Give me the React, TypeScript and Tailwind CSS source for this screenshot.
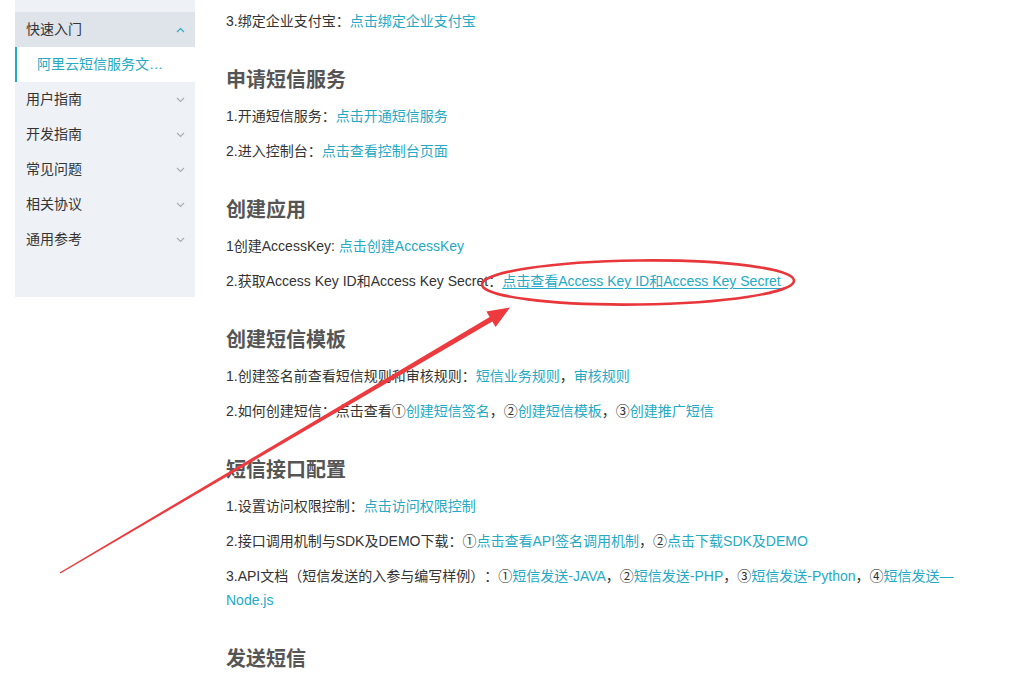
import React from 'react';

const FONT = { fontFamily: '"Liberation Sans", "Noto Sans CJK SC", sans-serif' };

type Part = string | { link: string; underline?: boolean };

interface Section {
    title?: string;
    lines: Part[][];
}

const sections: Section[] = [
    {
        lines: [['3.绑定企业支付宝：', { link: '点击绑定企业支付宝' }]]
    },
    {
        title: '申请短信服务',
        lines: [
            ['1.开通短信服务：', { link: '点击开通短信服务' }],
            ['2.进入控制台：', { link: '点击查看控制台页面' }]
        ]
    },
    {
        title: '创建应用',
        lines: [
            ['1创建AccessKey: ', { link: '点击创建AccessKey' }],
            ['2.获取Access Key ID和Access Key Secret：', { link: '点击查看Access Key ID和Access Key Secret', underline: true }]
        ]
    },
    {
        title: '创建短信模板',
        lines: [
            ['1.创建签名前查看短信规则和审核规则：', { link: '短信业务规则' }, '，', { link: '审核规则' }],
            ['2.如何创建短信：点击查看①', { link: '创建短信签名' }, '，②', { link: '创建短信模板' }, '，③', { link: '创建推广短信' }]
        ]
    },
    {
        title: '短信接口配置',
        lines: [
            ['1.设置访问权限控制：', { link: '点击访问权限控制' }],
            ['2.接口调用机制与SDK及DEMO下载：①', { link: '点击查看API签名调用机制' }, '，②', { link: '点击下载SDK及DEMO' }],
            [
                '3.API文档（短信发送的入参与编写样例）：①',
                { link: '短信发送-JAVA' },
                '，②',
                { link: '短信发送-PHP' },
                '，③',
                { link: '短信发送-Python' },
                '，④',
                { link: '短信发送—Node.js' }
            ]
        ]
    },
    {
        title: '发送短信',
        lines: []
    }
];

const navItems = ['用户指南', '开发指南', '常见问题', '相关协议', '通用参考'];

const Chevron = ({ up, color }: { up?: boolean; color: string }) => (
    <svg width="9" height="6" viewBox="0 0 9 6" className="shrink-0">
        <polyline
            points={up ? '1,5 4.5,1.5 8,5' : '1,1 4.5,4.5 8,1'}
            fill="none"
            stroke={color}
            strokeWidth="1.1"
        />
    </svg>
);

const Sidebar = () => (
    <aside className="ml-[15px] w-[180px] h-[297px] shrink-0 bg-[#eef1f5] pt-[12px] text-[14px] text-[#333]">
        <div className="h-[35px] flex items-center justify-between pl-[11px] pr-[10px] bg-[#dfe4ea]">
            <span>快速入门</span>
            <Chevron up color="#25a9c4" />
        </div>
        <div className="h-[35px] flex items-center bg-white border-l-[2px] border-[#25a9c4] pl-[20px] pr-[30px]">
            <span className="truncate text-[#25a9c4]">阿里云短信服务文档使用指引</span>
        </div>
        {navItems.map(item => (
            <div key={item} className="h-[35px] flex items-center justify-between pl-[11px] pr-[10px]">
                <span>{item}</span>
                <Chevron color="#a8adb5" />
            </div>
        ))}
    </aside>
);

const Line = ({ parts }: { parts: Part[] }) => (
    <p className="leading-[24px] mb-[11px] text-[14px] text-[#333] [text-spacing-trim:space-all]">
        {parts.map((part, i) =>
            typeof part === 'string' ? (
                <span key={i}>{part}</span>
            ) : (
                <a key={i} className={`text-[#25a9c4] ${part.underline ? 'underline underline-offset-2' : ''}`}>
                    {part.link}
                </a>
            )
        )}
    </p>
);

// red annotation drawn on top of the page
const Overlay = () => (
    <svg className="absolute left-0 top-0 pointer-events-none" width="1022" height="679" viewBox="0 0 1022 679">
        <ellipse
            cx="638"
            cy="282.5"
            rx="156"
            ry="22"
            fill="none"
            stroke="#e8363b"
            strokeWidth="2.6"
            transform="rotate(-0.7 638 282.5)"
        />
        <polygon
            points="59.6,572.4 489.7,317.1 486.4,311.4 510,307.5 495.6,327 492.3,321.4 60.4,573.6"
            fill="#ec3a3e"
        />
    </svg>
);

export default function App() {
    return (
        <div className="relative w-[1022px] h-[679px] overflow-hidden bg-white flex" style={FONT}>
            <Sidebar />
            <main className="ml-[31px] w-[728px] pt-[9px]">
                {sections.map((s, i) => (
                    <section key={i}>
                        {s.title && (
                            <h2 className="text-[20px] leading-[30px] font-bold text-[#555] mt-[32px] mb-[9px]">{s.title}</h2>
                        )}
                        {s.lines.map((l, j) => (
                            <Line key={j} parts={l} />
                        ))}
                    </section>
                ))}
            </main>
            <Overlay />
        </div>
    );
}
